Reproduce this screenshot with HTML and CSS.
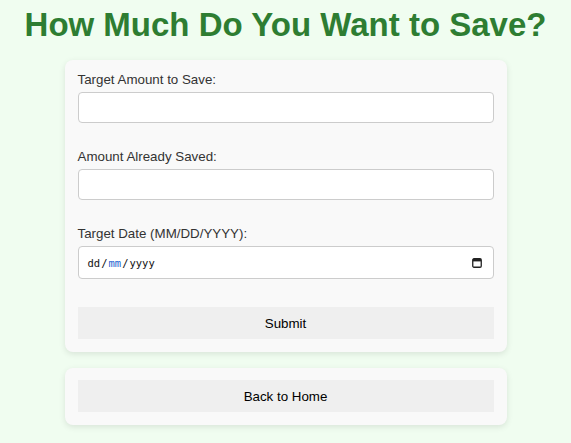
FILE: index.html
```html
<!DOCTYPE html>
<html lang="en">
<head>
<meta charset="utf-8">
<title>How Much Do You Want to Save?</title>
<link rel="stylesheet" href="styles.css">
</head>
<body>
<main class="page">
  <h1 class="title">How Much Do You Want to Save?</h1>
  <form class="card" onsubmit="return false;">
    <div class="field">
      <label class="label" for="target">Target Amount to Save:</label>
      <input class="input" type="number" id="target">
    </div>
    <div class="field">
      <label class="label" for="saved">Amount Already Saved:</label>
      <input class="input" type="number" id="saved">
    </div>
    <div class="field field-last">
      <label class="label" for="date">Target Date (MM/DD/YYYY):</label>
      <div class="input input-date" id="date" role="textbox" tabindex="0">
        <span class="date-text"><span>dd</span><span class="sep">/</span><span class="date-active">mm</span><span class="sep">/</span><span>yyyy</span></span>
        <svg class="date-icon" width="10" height="10" viewBox="0 0 10 10" aria-hidden="true">
          <rect x="0.75" y="0.75" width="8.5" height="8.5" rx="1.2" fill="none" stroke="#222" stroke-width="1.3"/>
          <rect x="1" y="1" width="8" height="2.4" fill="#222"/>
        </svg>
      </div>
    </div>
    <button class="btn" type="submit">Submit</button>
  </form>
  <div class="card">
    <button class="btn" type="button">Back to Home</button>
  </div>
</main>
</body>
</html>
```
FILE: styles.css
```css
html, body {
  margin: 0;
  padding: 0;
}
body {
  background: #f0fdf0;
  font-family: "Liberation Sans", Arial, sans-serif;
  color: #333;
}
.page {
  display: flex;
  flex-direction: column;
  align-items: center;
  padding-top: 6px;
}
.title {
  margin: 0 0 16px;
  font-size: 33px;
  font-weight: bold;
  color: #2e7d32;
  text-align: center;
}
.card {
  box-sizing: border-box;
  width: 442px;
  background: #f9f9f9;
  border-radius: 8px;
  box-shadow: 0 2px 6px rgba(0, 0, 0, 0.1);
  padding: 12px 13px 13px;
  margin: 0 0 16px;
  display: flex;
  flex-direction: column;
}
.field {
  display: flex;
  flex-direction: column;
  margin-bottom: 26px;
}
.field-last {
  margin-bottom: 28px;
}
.label {
  font-size: 13.33px;
  color: #333;
  margin-bottom: 5px;
}
.input {
  box-sizing: border-box;
  width: 100%;
  height: 31px;
  padding: 6px 8px;
  border: 1px solid #ccc;
  border-radius: 4px;
  background: #fff;
  font-family: "Liberation Sans", Arial, sans-serif;
  font-size: 13.33px;
  outline: none;
}
.input-date {
  height: 33px;
  display: flex;
  align-items: center;
  justify-content: space-between;
  padding: 0 11px 0 9px;
}
.date-text {
  font-family: "DejaVu Sans Mono", monospace;
  font-size: 10.5px;
  color: #111;
  display: flex;
  gap: 1px;
}
.date-active {
  color: #1a5fd0;
}
.date-icon {
  display: block;
}
.btn {
  box-sizing: border-box;
  width: 100%;
  height: 32px;
  border: none;
  border-radius: 0;
  background: #efefef;
  color: #000;
  font-family: "Liberation Sans", Arial, sans-serif;
  font-size: 13.33px;
  cursor: pointer;
}
```
